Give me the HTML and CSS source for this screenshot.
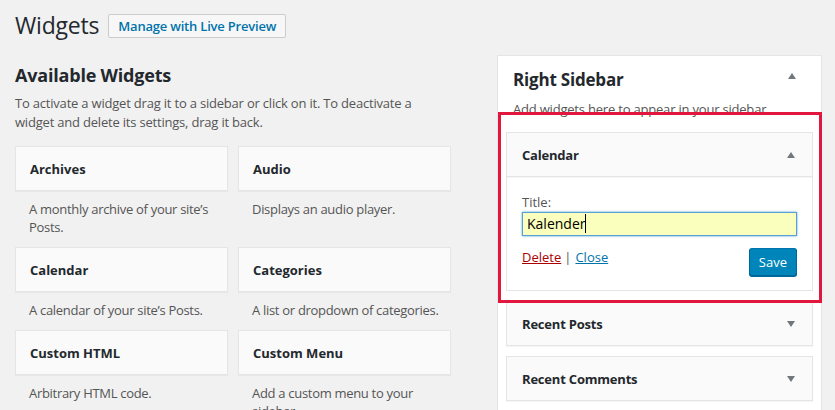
FILE: index.html
```html
<!DOCTYPE html>
<html>
<head>
<meta charset="utf-8">
<link rel="stylesheet" href="styles.css">
</head>
<body>
<div class="wrap">
  <div class="page-head">
    <h1 class="page-title">Widgets</h1>
    <a class="head-btn">Manage with Live Preview</a>
  </div>
  <div class="columns">
    <div class="available">
      <h2 class="avail-title">Available Widgets</h2>
      <p class="avail-desc">To activate a widget drag it to a sidebar or click on it. To deactivate a widget and delete its settings, drag it back.</p>
      <div class="widget-grid">
        <div class="widget-item">
          <div class="widget-card">Archives</div>
          <p class="widget-desc">A monthly archive of your site’s Posts.</p>
        </div>
        <div class="widget-item">
          <div class="widget-card">Audio</div>
          <p class="widget-desc">Displays an audio player.</p>
        </div>
        <div class="widget-item">
          <div class="widget-card">Calendar</div>
          <p class="widget-desc">A calendar of your site’s Posts.</p>
        </div>
        <div class="widget-item">
          <div class="widget-card">Categories</div>
          <p class="widget-desc">A list or dropdown of categories.</p>
        </div>
        <div class="widget-item">
          <div class="widget-card">Custom HTML</div>
          <p class="widget-desc">Arbitrary HTML code.</p>
        </div>
        <div class="widget-item">
          <div class="widget-card">Custom Menu</div>
          <p class="widget-desc">Add a custom menu to your sidebar.</p>
        </div>
      </div>
    </div>
    <div class="sidebar-col">
      <div class="sidebar-panel">
        <div class="panel-head">
          <h2 class="panel-title">Right Sidebar</h2>
          <span class="arrow up"></span>
        </div>
        <p class="panel-desc">Add widgets here to appear in your sidebar.</p>
        <div class="sb-widget open">
          <div class="sb-head">
            <span class="sb-title">Calendar</span>
            <span class="arrow up"></span>
          </div>
          <div class="sb-body">
            <label class="field-label">Title:</label>
            <div class="text-input"><span class="caret">Kalender</span></div>
            <div class="actions">
              <div class="links"><a class="link-delete">Delete</a><span class="sep">|</span><a class="link-close">Close</a></div>
              <a class="save-btn">Save</a>
            </div>
          </div>
        </div>
        <div class="sb-widget">
          <div class="sb-head">
            <span class="sb-title">Recent Posts</span>
            <span class="arrow down"></span>
          </div>
        </div>
        <div class="sb-widget">
          <div class="sb-head">
            <span class="sb-title">Recent Comments</span>
            <span class="arrow down"></span>
          </div>
        </div>
        <div class="highlight"></div>
      </div>
    </div>
  </div>
</div>
</body>
</html>
```
FILE: styles.css
```css
* { box-sizing: border-box; }
html, body { margin: 0; padding: 0; }
body {
  background: #f1f1f1;
  font-family: "Open Sans", "Noto Sans", sans-serif;
  font-size: 13px;
  color: #23282d;
  overflow: hidden;
  height: 410px;
}
.wrap { padding: 13px 13px 0 15px; }
.page-head { display: flex; align-items: center; gap: 9px; height: 25px; }
.page-title { margin: 0; font-size: 23px; font-weight: 400; line-height: 25px; color: #23282d; letter-spacing: -0.2px; }
.head-btn {
  display: inline-block;
  height: 24px;
  line-height: 22px;
  padding: 0 9px;
  border: 1px solid #ccc;
  border-radius: 2px;
  background: #f7f7f7;
  color: #0073aa;
  font-weight: 600;
  font-size: 13px;
  letter-spacing: -0.2px;
}
.columns { display: flex; gap: 47px; margin-top: 17px; }
.available { width: 435px; padding-top: 8px; }
.avail-title { margin: 0; font-size: 18px; font-weight: 700; line-height: 24px; letter-spacing: -0.2px; }
.avail-desc { margin: 7px 0 14px; color: #555; line-height: 19px; letter-spacing: -0.2px; }
.widget-grid { display: grid; grid-template-columns: 213px 213px; column-gap: 10px; }
.widget-card {
  height: 45px;
  border: 1px solid #e5e5e5;
  background: #fafafa;
  padding: 0 14px;
  display: flex;
  align-items: center;
  font-weight: 700;
  color: #23282d;
  box-shadow: 0 1px 1px rgba(0,0,0,.04);
}
.widget-desc { margin: 9px 0 11px; padding: 0 10px 0 14px; color: #555; line-height: 18px; letter-spacing: -0.3px; }
.sidebar-col { width: 325px; }
.sidebar-panel {
  position: relative;
  background: #fff;
  border: 1px solid #e5e5e5;
  padding: 0 8px;
  height: 400px;
}
.panel-head { display: flex; justify-content: space-between; align-items: center; padding: 12px 17px 0 7px; height: 36px; }
.panel-title { margin: 0; font-size: 17px; font-weight: 700; line-height: 24px; letter-spacing: -0.2px; }
.panel-desc { margin: 8px 0 0 7px; color: #555; line-height: 18px; height: 32px; letter-spacing: -0.2px; }
.arrow { width: 0; height: 0; border-left: 4px solid transparent; border-right: 4px solid transparent; }
.arrow.up { border-bottom: 6px solid #72777c; }
.arrow.down { border-top: 6px solid #72777c; }
.panel-head .arrow { margin-top: -8px; }
.sb-widget { margin-bottom: 10px; }
.sb-head {
  height: 45px;
  border: 1px solid #e5e5e5;
  background: #fafafa;
  display: flex;
  align-items: center;
  justify-content: space-between;
  padding: 0 17px 0 15px;
  box-shadow: 0 1px 1px rgba(0,0,0,.04);
}
.sb-title { font-weight: 700; letter-spacing: -0.2px; }
.sb-body {
  border: 1px solid #e5e5e5;
  border-top: none;
  padding: 16px 15px 14px 15px;
  height: 114px;
}
.field-label { display: block; color: #555; line-height: 18px; }
.text-input {
  margin-top: 1px;
  height: 24px;
  border: 1px solid #5b9dd9;
  background: #faffbd;
  box-shadow: 0 0 2px rgba(30,140,190,.8);
  padding: 0 4px;
  font-size: 14px;
  line-height: 22px;
  color: #000;
}
.caret { border-right: 1px solid #000; }
.actions { display: flex; justify-content: space-between; align-items: flex-start; margin-top: 12px; }
.links { color: #555; line-height: 18px; padding-left: 0; }
.sep { margin: 0 4px 0 3px; }
.link-delete { color: #a00; text-decoration: underline; }
.link-close { color: #0073aa; text-decoration: underline; }
.save-btn {
  display: inline-block;
  height: 28px;
  line-height: 26px;
  padding: 0 9px;
  background: #0085ba;
  border: 1px solid #0073aa;
  border-color: #0073aa #006799 #006799;
  border-radius: 3px;
  box-shadow: 0 1px 0 #006799;
  color: #fff;
  font-size: 13px;
}
.highlight {
  position: absolute;
  left: 0;
  top: 56px;
  width: 324px;
  height: 191px;
  border: 3px solid #e2173d;
  pointer-events: none;
}
```
